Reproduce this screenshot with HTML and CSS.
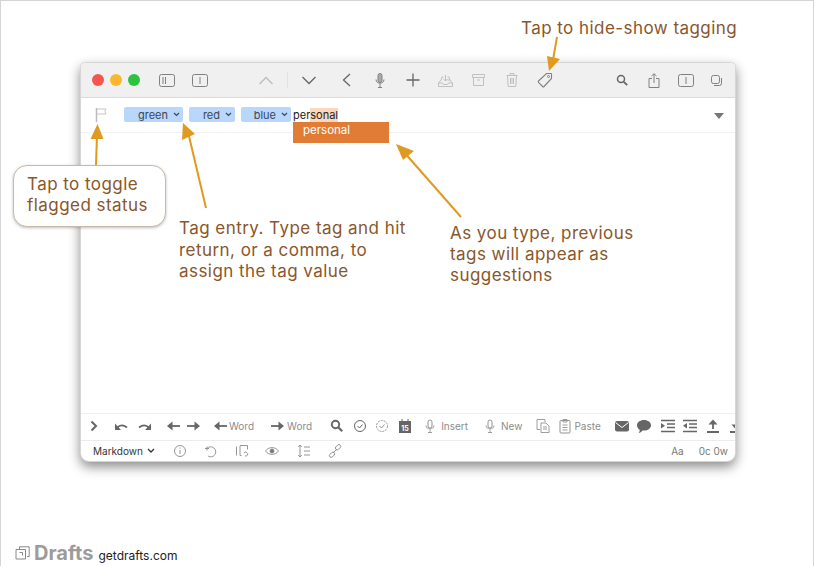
FILE: index.html
```html
<!DOCTYPE html>
<html lang="en">
<head>
<meta charset="utf-8">
<title>Drafts tagging</title>
<link rel="stylesheet" href="styles.css">
</head>
<body>
<div class="page">
  <div class="window">
    <header class="titlebar">
      <div class="lights"><i class="dot red"></i><i class="dot yellow"></i><i class="dot green"></i></div>
      <div class="btn first"><svg width="16" height="13" viewBox="0 0 16 13" class="st-mid"><rect x=".5" y=".5" width="15" height="12" rx="2"/><path d="M4 3v7M6.500 3v7"/></svg></div>
      <div class="btn"><svg width="16" height="13" viewBox="0 0 16 13" class="st-mid"><rect x=".5" y=".5" width="15" height="12" rx="2"/><path d="M8 3v7"/></svg></div>
      <div class="btn wide up"><svg width="16" height="9" viewBox="0 0 16 9" class="st-light"><path d="M1.500 8 8 1.500 14.500 8" stroke-width="1.300"/></svg></div>
      <div class="vline"></div>
      <div class="btn wide"><svg width="16" height="9" viewBox="0 0 16 9" class="st-dark"><path d="M1.500 1 8 7.500 14.500 1" stroke-width="1.300"/></svg></div>
      <div class="btn"><svg width="9" height="14" viewBox="0 0 9 14" class="st-dark"><path d="M8 1 1.500 7 8 13" stroke-width="1.300"/></svg></div>
      <div class="btn"><svg width="10" height="15" viewBox="0 0 10 15" class="st-mid"><rect x="3" y=".5" width="4" height="9" rx="2" fill="#aaa"/><path d="M1 6.500c0 5 8 5 8 0M5 11v3M3 14.500h4"/></svg></div>
      <div class="btn"><svg width="14" height="14" viewBox="0 0 14 14" class="st-dark"><path d="M7 .5v13M.5 7h13" stroke-width="1.300"/></svg></div>
      <div class="btn"><svg width="15" height="13" viewBox="0 0 15 13" class="st-faint"><path d="M3 6 .5 9v3.500h14V9L12 6H9.500M.5 9h4l1 1.500h4l1-1.500h4M7.500 1v6M5.500 5l2 2 2-2"/><path d="M5.500 3H4L3 6M9.500 3H11l1 3"/></svg></div>
      <div class="btn"><svg width="13" height="12" viewBox="0 0 13 12" class="st-faint"><path d="M.5.500h12v3H.5zM1.500 3.500v8h10v-8M5 6h3"/></svg></div>
      <div class="btn"><svg width="12" height="14" viewBox="0 0 12 14" class="st-faint"><path d="M.5 2.500h11M4 2.500v-2h4v2M1.500 2.500l.7 11h7.600l.7-11M4.500 5v6M6 5v6M7.500 5v6"/></svg></div>
      <div class="btn"><svg width="16" height="16" viewBox="0 0 16 16" class="st-mid"><path d="M9.500 1.500h4.500a.5.500 0 0 1 .5.500v4.500L7 14.500a1 1 0 0 1-1.400 0L1.500 10.400a1 1 0 0 1 0-1.400z" stroke-width="1.100"/><circle cx="11.500" cy="4.500" r="1"/></svg></div>
      <div class="btn-r first-r"><svg width="12" height="12" viewBox="0 0 12 12" class="st-dark"><circle cx="5" cy="5" r="3.500" stroke-width="1.500"/><path d="m7.800 7.800 3.400 3.400" stroke-width="1.800"/></svg></div>
      <div class="btn-r"><svg width="12" height="15" viewBox="0 0 12 15" class="st-mid"><path d="M4 5.500H1v9h10v-9H8M6 10V1M3.500 3 6 .7 8.500 3"/></svg></div>
      <div class="btn-r"><svg width="16" height="13" viewBox="0 0 16 13" class="st-mid"><rect x=".5" y=".5" width="15" height="12" rx="2"/><path d="M8 3v7"/></svg></div>
      <div class="btn-r last"><svg width="11" height="11" viewBox="0 0 11 11" class="st-mid"><rect x=".5" y=".5" width="8" height="8" rx="2"/><path d="M10.500 3v5.500a2 2 0 0 1-2 2H3"/></svg></div>
    </header>

    <div class="tagrow">
      <svg class="flag" width="12" height="14" viewBox="0 0 12 14"><path d="M1.500 0v14" stroke="#bbb" stroke-width="1.500"/><path d="M2 1h9L9.800 3.500 11 6H2" fill="none" stroke="#c4c4c4"/></svg>
      <span class="tag t-green">green<svg class="chev" width="7" height="5" viewBox="0 0 7 5"><path d="m1 1 2.500 2.500L6 1"/></svg></span>
      <span class="tag t-red">red<svg class="chev" width="7" height="5" viewBox="0 0 7 5"><path d="m1 1 2.500 2.500L6 1"/></svg></span>
      <span class="tag t-blue">blue<svg class="chev" width="7" height="5" viewBox="0 0 7 5"><path d="m1 1 2.500 2.500L6 1"/></svg></span>
      <span class="entry">per<mark class="hl">sonal</mark></span>
      <i class="tri"></i>
      <div class="suggest">personal</div>
    </div>

    <main class="body"></main>

    <div class="keys">
      <svg class="ic m5" viewBox="0 0 16 16"><path class="s" d="m5.500 3.500 4.500 4.500-4.500 4.500" stroke-width="2"/></svg>
      <svg class="ic m11" viewBox="0 0 16 16"><path class="s" d="M4 10c2.500-3 6-3.500 10-.5" stroke-width="1.800"/><path class="f" d="M2 5.500V12h6z"/></svg>
      <svg class="ic m8" viewBox="0 0 16 16"><path class="s" d="M12 10c-2.500-3-6-3.500-10-.5" stroke-width="1.800"/><path class="f" d="M14 5.500V12H8z"/></svg>
      <svg class="ic m12" viewBox="0 0 16 16"><path class="s" d="M7 8h8" stroke-width="1.800"/><path class="f" d="M2 8l5.500-4.500v9z"/></svg>
      <svg class="ic m5" viewBox="0 0 16 16"><path class="s" d="M1 8h8" stroke-width="1.800"/><path class="f" d="M14 8 8.500 3.500v9z"/></svg>
      <svg class="ic m10" viewBox="0 0 16 16"><path class="s" d="M7 8h8" stroke-width="1.800"/><path class="f" d="M2 8l5.500-4.500v9z"/></svg>
      <span class="k m1">Word</span>
      <svg class="ic m16" viewBox="0 0 16 16"><path class="s" d="M1 8h8" stroke-width="1.800"/><path class="f" d="M14 8 8.500 3.500v9z"/></svg>
      <span class="k m1">Word</span>
      <svg class="ic m17" viewBox="0 0 16 16"><circle class="s" cx="6.500" cy="6.500" r="3.700" stroke-width="1.900"/><path class="s" d="m9.500 9.500 3.700 3.700" stroke-width="2.200"/></svg>
      <svg class="ic m7" viewBox="0 0 16 16"><circle class="s" cx="8" cy="8" r="5.500"/><path class="s" d="m5.500 8 2 2 3-3.500"/></svg>
      <svg class="ic m6 fade" viewBox="0 0 16 16"><circle class="s" cx="8" cy="8" r="5.500" stroke-dasharray="2 1"/><path class="s" d="m5.500 8 2 2 3-3.500"/></svg>
      <svg class="ic m7" viewBox="0 0 16 16"><path class="f" d="M2 3h12v12H2z"/><path class="s" d="M5 1v3M11 1v3"/><text x="8" y="13" class="cal">15</text></svg>
      <svg class="ic m9 fade" viewBox="0 0 16 16"><rect class="s" x="6" y="2" width="4" height="8" rx="2"/><path class="s" d="M4 7.500c0 4.500 8 4.500 8 0M8 11.500V14M6 14.500h4" stroke-width=".9"/></svg>
      <span class="k m3">Insert</span>
      <svg class="ic m14 fade" viewBox="0 0 16 16"><rect class="s" x="6" y="2" width="4" height="8" rx="2"/><path class="s" d="M4 7.500c0 4.500 8 4.500 8 0M8 11.500V14M6 14.500h4" stroke-width=".9"/></svg>
      <span class="k m3">New</span>
      <svg class="ic m13 fade" viewBox="0 0 16 16"><path class="s" d="M10 4V1.500H2v10h3" stroke-width=".9"/><path class="s" d="M6 5h5l3 3v6.500H6zM8 9h4M8 11h4" stroke-width=".9"/></svg>
      <svg class="ic m6 fade" viewBox="0 0 16 16"><rect class="s" x="3" y="2.500" width="10" height="12.500" rx="1"/><path class="s" d="M6 1.500h4v2.500H6zM5.500 7h5M5.500 9.500h5M5.500 12h5" stroke-width=".9"/></svg>
      <span class="k m1">Paste</span>
      <svg class="ic m13" viewBox="0 0 16 16"><rect class="f" x="1" y="3" width="14" height="10.500" rx="2"/><path d="m1.500 4.500 6.500 5 6.500-5" fill="none" stroke="#fff"/></svg>
      <svg class="ic m6" viewBox="0 0 16 16"><path class="f" d="M8 2c4 0 7 2.300 7 5.300s-3 5.300-7 5.300l-1.500-.1C5.500 14 4 15 2.500 15c1-1 1.300-2 1.200-3.200C2 10.800 1 9.200 1 7.300 1 4.300 4 2 8 2z"/></svg>
      <svg class="ic m8" viewBox="0 0 16 16"><path class="s" d="M1 2.500h14M7 6h8M7 9.500h8M1 13.500h14" stroke-width="1.300"/><path class="f" d="M1 5l4 2.800-4 2.800z"/></svg>
      <svg class="ic m6" viewBox="0 0 16 16"><path class="s" d="M1 2.500h14M7 6h8M7 9.500h8M1 13.500h14" stroke-width="1.300"/><path class="f" d="M5 5 1 7.800l4 2.800z"/></svg>
      <svg class="ic m7" viewBox="0 0 16 16"><path class="s" d="M8 11V5M2 14h12" stroke-width="1.800"/><path class="f" d="M8 1.500l-4.500 5h9z"/></svg>
      <svg class="ic m7" viewBox="0 0 16 16"><path class="s" d="M8 1v6M2 14h12" stroke-width="1.800"/><path class="f" d="M8 11.500l-4.500-5h9z"/></svg>
    </div>

    <footer class="status">
      <span class="syntax">Markdown</span>
      <svg class="chev2" width="8" height="6" viewBox="0 0 8 6"><path d="m1 1 3 3 3-3"/></svg>
      <svg class="ic2 s1" viewBox="0 0 14 14"><circle cx="7" cy="7" r="5.500"/><path d="M7 6v4M7 3.500v1.200"/></svg>
      <svg class="ic2 s2" viewBox="0 0 14 14"><path d="M3 4.500a5 5 0 1 1 1 7.500"/><path d="M1 4.500h4M3 2.500v4"/></svg>
      <svg class="ic2 s3" viewBox="0 0 14 14"><path d="M5 2v9.500h1.500M1.500 2.500v9M5 1.500h7.500v4M9 9a2 2 0 1 1 1 3"/></svg>
      <svg class="ic2 s4" viewBox="0 0 14 14"><path d="M.5 7c3-4.500 10-4.500 13 0-3 4.500-10 4.500-13 0z"/><circle cx="7" cy="7" r="2" fill="#777"/></svg>
      <svg class="ic2 s5" viewBox="0 0 14 14"><path d="M3 1v12M1.200 3 3 1l1.800 2M1.200 11 3 13l1.800-2M7 3h6M7 7h6M7 11h6"/></svg>
      <svg class="ic2 s6" viewBox="0 0 14 14"><rect x="7" y="1.500" width="6" height="3.500" rx="1.700" transform="rotate(-45 10 3.200)"/><path d="M9 5 5 9"/><rect x="1" y="9" width="6" height="3.500" rx="1.700" transform="rotate(-45 4 10.700)"/></svg>
      <span class="meta aa">Aa</span>
      <span class="meta cnt">0c 0w</span>
    </footer>
  </div>

  <div class="callout">Tap to toggle<br>flagged status</div>
  <p class="note n-top">Tap to hide-show tagging</p>
  <p class="note n-tag">Tag entry. Type tag and hit<br>return, or a comma, to<br>assign the tag value</p>
  <p class="note n-sug">As you type, previous<br>tags will appear as<br>suggestions</p>

  <svg class="arrows" width="815" height="566" viewBox="0 0 815 566">
    <g stroke="#e09a20" stroke-width="2" fill="none">
      <path d="M96 165 97 135"/>
      <path d="M206 208 188 132"/>
      <path d="M461 217 403 151"/>
      <path d="M557 37 553 60"/>
    </g>
    <g fill="#e09a20">
      <path d="M97.500 124 90.500 139H103.500z"/>
      <path d="M183 123 182 140 195 134z"/>
      <path d="M396 144 403 160 414 151z"/>
      <path d="M549 71 547 56 560 59z"/>
    </g>
  </svg>

  <div class="brand">
    <svg width="15" height="14" viewBox="0 0 15 14" fill="none" stroke="#888"><path d="M4.500 3V.8h9.700v9.700H12M1 3.500h9.500V13H1z" stroke-width="1"/><path d="M4.500 6.500h3v3" stroke-width="1"/></svg>
    <strong class="brand-name">Drafts</strong>
    <span class="brand-url">getdrafts.com</span>
  </div>
</div>
</body>
</html>
```
FILE: styles.css
```css
* { box-sizing: border-box; }
html, body { margin: 0; padding: 0; background: #fff; }
body { font-family: Inter, "Liberation Sans", sans-serif; }
.page {
  position: relative;
  width: 814px;
  height: 566px;
  border: 1px solid #d4d4d4;
  border-bottom: 0;
  overflow: hidden;
}

/* app window */
.window {
  position: absolute;
  left: 79px;
  top: 61px;
  width: 656px;
  height: 400px;
  display: flex;
  flex-direction: column;
  background: #fff;
  border-radius: 5px 5px 9px 9px;
  border: 1px solid #d6d6d6;
  box-shadow: 0 5px 12px rgba(0, 0, 0, .45);
}
.titlebar {
  height: 35px;
  flex: none;
  display: flex;
  align-items: center;
  background: #f0f0f0;
  border-bottom: 1px solid #dcdcdc;
  border-radius: 5px 5px 0 0;
  padding-left: 11px;
  padding-right: 5px;
}
.lights { display: flex; gap: 6px; }
.dot { width: 12px; height: 12px; border-radius: 50%; display: block; }
.red { background: #f4554e; }
.yellow { background: #fbb82e; }
.green { background: #2dc341; }
.btn, .btn-r { display: flex; justify-content: center; align-items: center; width: 33px; height: 100%; }
.btn-r { width: 32px; }
.btn.first { margin-left: 10px; }
.btn.wide { width: 42px; }
.btn.up { margin-left: 29px; }
.btn-r.first-r { margin-left: auto; }
.btn-r.last { width: 28px; }
.vline { width: 1px; height: 16px; background: #e2e2e2; }
.titlebar svg { fill: none; }
.st-dark { stroke: #666; }
.st-mid { stroke: #808080; }
.st-light { stroke: #bdbdbd; }
.st-faint { stroke: #c0c0c0; }

/* tag row */
.tagrow {
  position: relative;
  flex: none;
  height: 35px;
  display: flex;
  align-items: center;
  padding-left: 14px;
  padding-bottom: 1px;
  border-bottom: 1px solid #f2f2f2;
  font-size: 11px;
}
.flag { margin-right: 17px; fill: none; }
.tag {
  height: 15px;
  display: flex;
  align-items: center;
  justify-content: flex-end;
  margin-right: 6px;
  padding-right: 3px;
  background: #b9d6fd;
  border-radius: 2px;
  color: #3b4656;
}
.t-green { width: 59px; }
.t-red { width: 46px; }
.t-blue { width: 50px; margin-right: 2px; }
.chev { margin-left: 5px; fill: none; stroke: #3b4656; stroke-width: 1.200; }
.entry { color: #222; line-height: 16px; }
.hl { background: #fcd8ba; color: #222; }
.tri {
  position: absolute;
  right: 11px;
  top: 15px;
  width: 0;
  height: 0;
  border-left: 5px solid transparent;
  border-right: 5px solid transparent;
  border-top: 6px solid #777;
}
.suggest {
  position: absolute;
  left: 212px;
  top: 24px;
  width: 96px;
  height: 21px;
  padding: 1px 0 0 10px;
  background: #e07c35;
  color: #fff;
  font-size: 11.500px;
  line-height: 15px;
  z-index: 2;
}
.body { flex: 1; }

/* key bar */
.keys {
  flex: none;
  height: 28px;
  display: flex;
  align-items: center;
  overflow: hidden;
  padding-bottom: 2px;
  border-top: 1px solid #f0f0f0;
  border-bottom: 1px solid #ececec;
}
.ic { width: 16px; height: 16px; flex: none; }
.ic .s { fill: none; stroke: #666; }
.ic .f { fill: #666; }
.ic .cal { fill: #fff; font-size: 7px; font-weight: 700; text-anchor: middle; }
.fade { opacity: .7; }
.k { font-size: 10px; color: #8c8c8c; flex: none; }
.m1 { margin-left: 1px; }
.m3 { margin-left: 3px; }
.m5 { margin-left: 5px; }
.m6 { margin-left: 6px; }
.m7 { margin-left: 7px; }
.m8 { margin-left: 8px; }
.m9 { margin-left: 9px; }
.m10 { margin-left: 10px; }
.m11 { margin-left: 11px; }
.m12 { margin-left: 12px; }
.m13 { margin-left: 13px; }
.m14 { margin-left: 14px; }
.m16 { margin-left: 16px; }
.m17 { margin-left: 17px; }

/* status bar */
.status {
  flex: none;
  height: 20px;
  display: flex;
  align-items: center;
  padding-left: 12px;
  padding-right: 7px;
  font-size: 10px;
}
.syntax { color: #333; }
.chev2 { margin-left: 4px; fill: none; stroke: #333; stroke-width: 1.300; }
.ic2 { width: 14px; height: 14px; flex: none; fill: none; stroke: #8a8a8a; stroke-width: .9; }
.s1 { margin-left: 18px; }
.s2 { margin-left: 17px; }
.s3 { margin-left: 17px; }
.s4 { margin-left: 16px; }
.s5 { margin-left: 18px; }
.s6 { margin-left: 17px; }
.meta { color: #777; }
.aa { margin-left: auto; }
.cnt { margin-left: 15px; }

/* annotations */
.callout {
  position: absolute;
  left: 12px;
  top: 164px;
  width: 153px;
  height: 62px;
  padding: 8px 13px;
  background: #fff;
  border: 1px solid #c9b9a8;
  border-radius: 14px;
  box-shadow: 0 1px 3px rgba(0, 0, 0, .25);
  color: #8a562a;
  font-size: 17px;
  letter-spacing: .45px;
  line-height: 21px;
}
.note {
  position: absolute;
  margin: 0;
  color: #8a562a;
  font-size: 17px;
  letter-spacing: .45px;
  line-height: 21.500px;
  white-space: nowrap;
}
.n-top { left: 520px; top: 17px; }
.n-tag { left: 178px; top: 217px; }
.n-sug { left: 449px; top: 222px; line-height: 21px; }
.arrows { position: absolute; left: -1px; top: -1px; pointer-events: none; }

/* brand */
.brand {
  position: absolute;
  left: 14px;
  top: 538px;
  display: flex;
  align-items: center;
  height: 28px;
}
.brand-name { margin-left: 4px; color: #9b9b9b; font-size: 20px; font-weight: 700; }
.brand-url { margin-left: 5px; margin-top: 5px; color: #222; font-size: 12px; }
```
